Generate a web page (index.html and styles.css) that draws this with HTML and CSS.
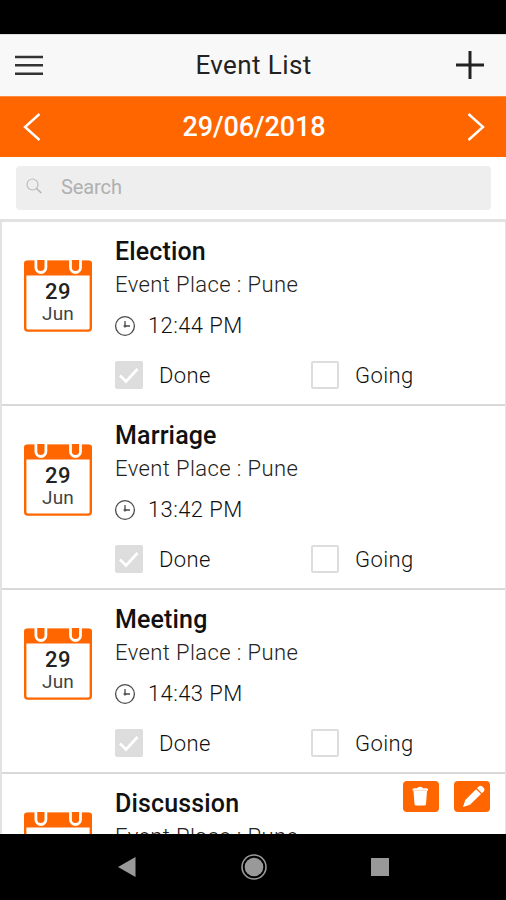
FILE: index.html
```
<!DOCTYPE html>
<html lang="en">
<head>
<meta charset="utf-8">
<title>Event List</title>
<link rel="stylesheet" href="styles.css">
</head>
<body>
<svg width="0" height="0" class="defs" aria-hidden="true">
  <symbol id="cal" viewBox="0 0 68 72">
    <rect x="1.2" y="2" width="65.6" height="68.6" rx="2.5" fill="#fff" stroke="#ff6600" stroke-width="2.4"/>
    <path d="M0 15.500V3.500a3 3 0 0 1 3-3h62a3 3 0 0 1 3 3v12z" fill="#ff6600"/>
    <path d="M11.900 0v7.500a5 5 0 0 0 10 0V0M46.500 0v7.500a5 5 0 0 0 10 0V0" fill="#ff6600" stroke="#fff" stroke-width="2.800"/>
  </symbol>
  <symbol id="clock" viewBox="0 0 22 22">
    <circle cx="11" cy="11" r="9.400" fill="none" stroke="#4a4a4a" stroke-width="1.300"/>
    <path d="M11 6V11h5" fill="none" stroke="#4a4a4a" stroke-width="1.300"/>
    <circle cx="11" cy="11" r="1.500" fill="#555"/>
  </symbol>
</svg>
<div class="screen">
  <div class="status"></div>
  <header class="bar">
    <svg class="menu" width="28" height="21" viewBox="0 0 28 21"><path d="M0 2h28M0 10.300h28M0 18.700h28" stroke="#333" stroke-width="2.500"/></svg>
    <h1>Event List</h1>
    <svg class="plus" width="28" height="28" viewBox="0 0 28 28"><path d="M0 14h28M14 0v28" stroke="#222" stroke-width="3"/></svg>
  </header>
  <nav class="datebar">
    <svg width="18" height="28" viewBox="0 0 18 28"><path d="M16.500 1L2 14l14.500 13" fill="none" stroke="#fff" stroke-width="2.400"/></svg>
    <span class="date">29/06/2018</span>
    <svg width="18" height="28" viewBox="0 0 18 28"><path d="M1.500 1L16 14 1.500 27" fill="none" stroke="#fff" stroke-width="2.400"/></svg>
  </nav>
  <div class="searchwrap">
    <div class="search">
      <svg width="16" height="16" viewBox="0 0 16 16"><circle cx="6.500" cy="6.500" r="5.500" fill="none" stroke="#bdbdbd" stroke-width="1.200"/><path d="M10.500 10.500l4.800 4.500" stroke="#b5b5b5" stroke-width="1.600"/></svg>
      <span>Search</span>
    </div>
  </div>
  <main class="list">
    <article class="card">
      <div class="cal"><svg width="68" height="72"><use href="#cal"/></svg><b>29</b><i>Jun</i></div>
      <div class="info">
        <h2>Election</h2>
        <p class="place">Event Place : Pune</p>
        <p class="time"><svg width="22" height="22"><use href="#clock"/></svg><span>12:44 PM</span></p>
        <div class="checks">
          <div class="check"><span class="box on"><svg width="28" height="28" viewBox="0 0 28 28"><path d="M5 14.500l6 6L22.500 8" fill="none" stroke="#fff" stroke-width="2.600"/></svg></span><span>Done</span></div>
          <div class="check"><span class="box"></span><span>Going</span></div>
        </div>
      </div>
    </article>
    <article class="card">
      <div class="cal"><svg width="68" height="72"><use href="#cal"/></svg><b>29</b><i>Jun</i></div>
      <div class="info">
        <h2>Marriage</h2>
        <p class="place">Event Place : Pune</p>
        <p class="time"><svg width="22" height="22"><use href="#clock"/></svg><span>13:42 PM</span></p>
        <div class="checks">
          <div class="check"><span class="box on"><svg width="28" height="28" viewBox="0 0 28 28"><path d="M5 14.500l6 6L22.500 8" fill="none" stroke="#fff" stroke-width="2.600"/></svg></span><span>Done</span></div>
          <div class="check"><span class="box"></span><span>Going</span></div>
        </div>
      </div>
    </article>
    <article class="card">
      <div class="cal"><svg width="68" height="72"><use href="#cal"/></svg><b>29</b><i>Jun</i></div>
      <div class="info">
        <h2>Meeting</h2>
        <p class="place">Event Place : Pune</p>
        <p class="time"><svg width="22" height="22"><use href="#clock"/></svg><span>14:43 PM</span></p>
        <div class="checks">
          <div class="check"><span class="box on"><svg width="28" height="28" viewBox="0 0 28 28"><path d="M5 14.500l6 6L22.500 8" fill="none" stroke="#fff" stroke-width="2.600"/></svg></span><span>Done</span></div>
          <div class="check"><span class="box"></span><span>Going</span></div>
        </div>
      </div>
    </article>
    <article class="card">
      <div class="cal"><svg width="68" height="72"><use href="#cal"/></svg></div>
      <div class="info">
        <h2>Discussion</h2>
        <p class="place">Event Place : Pune</p>
      </div>
      <div class="actions">
        <span class="btn"><svg width="36" height="31" viewBox="0 0 36 31"><path d="M9.500 8.700q0-1.400 2-1.400h2.500q.500-1.600 3-1.600t3 1.600H23q2 0 2 1.400v1H9.500zM10.500 10h13.500l-1 13q-.200 1.500-1.700 1.500h-8.100q-1.500 0-1.700-1.500z" fill="#fff"/></svg></span>
        <span class="btn"><svg width="36" height="31" viewBox="0 0 36 31"><path d="M9 26l2.300-7L22 8.300l5 4.800L16 23.800zM23 7.300l2-2q1.700-1.400 3.400.200l1.400 1.400q1.600 1.700.100 3.300l-1.900 2z" fill="#fff"/></svg></span>
      </div>
    </article>
  </main>
  <footer class="navbar">
    <svg width="18" height="20" viewBox="0 0 18 20"><path d="M0 10L17.500 0v20z" fill="#999"/></svg>
    <svg width="26" height="26" viewBox="0 0 26 26"><circle cx="13" cy="13" r="12" fill="none" stroke="#999" stroke-width="1.600"/><circle cx="13" cy="13" r="9.300" fill="#999"/></svg>
    <span class="square"></span>
  </footer>
</div>
</body>
</html>
```
FILE: styles.css
```
* { box-sizing: border-box; margin: 0; padding: 0; }
body { width: 506px; height: 900px; overflow: hidden; background: #000; font-family: Roboto, "Liberation Sans", sans-serif; }
svg { display: block; flex: none; }
.defs { position: absolute; }
.screen { height: 900px; display: flex; flex-direction: column; }
.status { height: 34px; background: #000; flex: none; }
.bar { height: 62px; flex: none; background: #f8f8f8; display: flex; align-items: center; justify-content: space-between; padding: 0 22px 0 15px; border-top: 1px solid #ddd; }
.bar h1 { font-size: 26px; font-weight: 400; color: #222; letter-spacing: 0.4px; white-space: nowrap; padding-left: 8px; margin-top: -2px; }
.plus { margin-top: -1px; }
.datebar { height: 61px; flex: none; background: #ff6600; border-top: 1px solid #ff8a40; display: flex; align-items: center; justify-content: space-between; padding: 0 21px 0 23px; }
.date { color: #fff; font-size: 27px; font-weight: 500; letter-spacing: -0.1px; }
.searchwrap { height: 62px; flex: none; background: #fff; padding: 9px 15px 0 16px; }
.search { height: 44px; background: #eee; border-radius: 4px; display: flex; align-items: center; padding: 0 0 2px 10px; gap: 19px; color: #b0b0b0; font-size: 20px; letter-spacing: -0.1px; }
.search svg { margin-top: -2px; }
.list { height: 615px; flex: none; overflow: hidden; background: #fff; border: solid #e2e2e2; border-width: 3px 1px 0 2px; }
.card { height: 184px; border-bottom: 2px solid #d9d9d9; display: flex; position: relative; padding-left: 22px; }
.cal { width: 68px; height: 72px; margin-top: 37.5px; flex: none; position: relative; display: flex; flex-direction: column; align-items: center; }
.cal svg { position: absolute; left: 0; top: 0; }
.cal b { position: relative; margin-top: 20px; font-size: 22px; line-height: 24px; font-weight: 500; color: #222; letter-spacing: 0.5px; }
.cal i { position: relative; font-style: normal; font-size: 19px; line-height: 20px; color: #444; letter-spacing: 0.1px; }
.info { margin-left: 23px; padding-top: 13px; flex: 1; white-space: nowrap; }
.info h2 { font-size: 25px; line-height: 34px; font-weight: 500; color: #111; letter-spacing: 0.15px; }
.place { font-size: 22px; line-height: 32px; font-weight: 300; color: #222; letter-spacing: 0.4px; }
.time { display: flex; align-items: center; gap: 12px; margin: 9px 0 0 -1px; font-size: 22px; line-height: 32px; font-weight: 300; color: #111; letter-spacing: 0.4px; }
.checks { display: flex; margin-top: 19px; font-size: 22px; font-weight: 300; color: #111; letter-spacing: 0.4px; }
.check { width: 196px; display: flex; align-items: center; gap: 15px; }
.check span:last-child { padding-left: 1px; }
.box { width: 28px; height: 28px; border: 2px solid #ddd; border-radius: 2px; flex: none; }
.box.on { border: 0; background: #ddd; }
.actions { position: absolute; right: 15px; top: 7px; display: flex; gap: 15px; }
.btn { width: 36px; height: 31px; background: #ff6600; border-radius: 4px; }
.navbar { height: 66px; flex: none; background: #000; display: flex; align-items: center; justify-content: space-between; padding: 0 117px 0 118px; }
.square { width: 18px; height: 18px; background: #999; }
```
